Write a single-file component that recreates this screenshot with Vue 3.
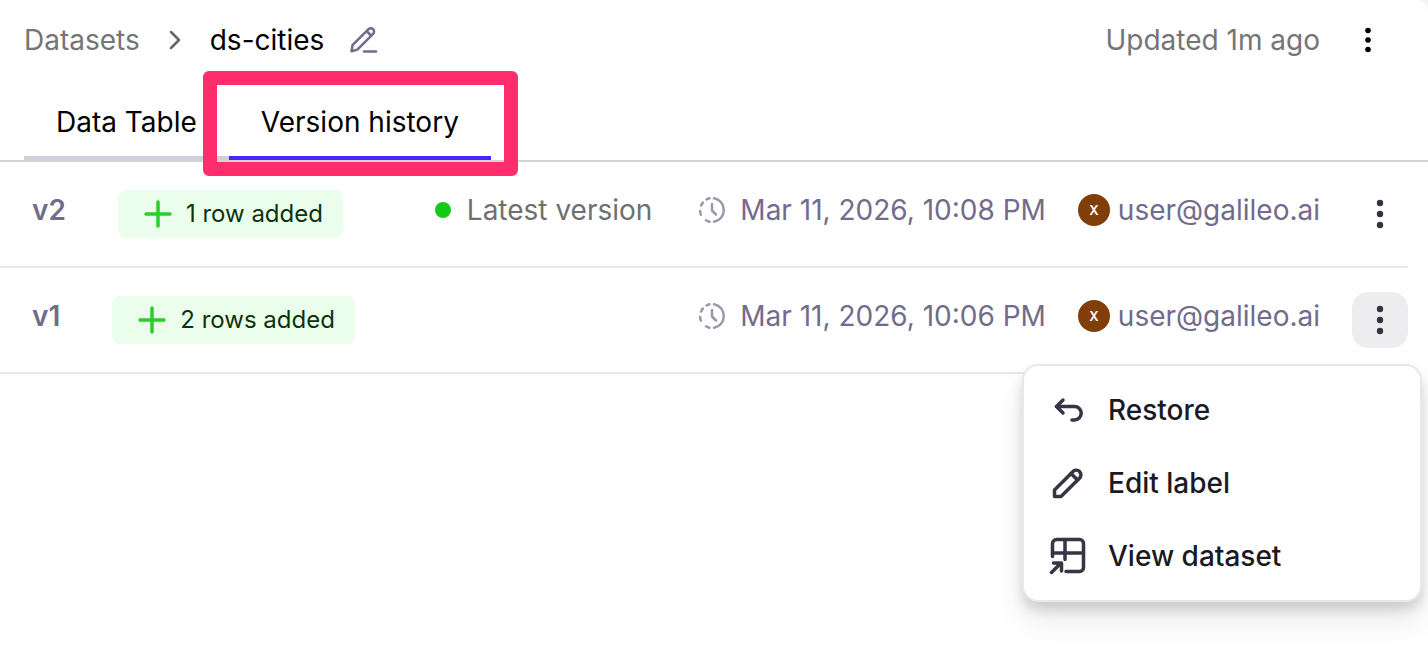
<template>
  <main class="page">
    <header class="header">
      <nav class="breadcrumb" aria-label="Breadcrumb">
        <a class="crumb" href="#">Datasets</a>
        <svg class="chevron" viewBox="0 0 32 32" aria-hidden="true">
          <path d="M12 8l8 8-8 8" />
        </svg>
        <span class="crumb-current">ds-cities</span>
        <button class="icon-button rename" type="button" aria-label="Rename dataset">
          <svg viewBox="0 0 32 32" aria-hidden="true">
            <path d="M4.500 27.200l1-6L21.500 5.200a3.200 3.200 0 0 1 4.600 4.600L10.400 25.600z" />
            <path d="M20.500 8l3 3" />
            <path d="M17 27.500h12" />
          </svg>
        </button>
      </nav>
      <div class="header-side">
        <span>Updated 1m ago</span>
        <button class="icon-button more header-more" type="button" aria-label="Dataset actions">
          <svg viewBox="0 0 32 32" aria-hidden="true">
            <circle cx="16" cy="6.500" r="2.800" />
            <circle cx="16" cy="16" r="2.800" />
            <circle cx="16" cy="25.500" r="2.800" />
          </svg>
        </button>
      </div>
    </header>

    <div class="tabs" role="tablist">
      <button
        v-for="tab in tabs"
        :key="tab"
        class="tab"
        :class="{ active: tab === activeTab }"
        type="button"
        role="tab"
        :aria-selected="tab === activeTab"
        @click="activeTab = tab"
      >
        {{ tab }}
      </button>
    </div>

    <ul class="versions">
      <li v-for="version in versions" :key="version.name" class="version">
        <span class="version-name">{{ version.name }}</span>
        <span class="badge">
          <svg viewBox="0 0 32 32" aria-hidden="true">
            <path d="M16 4v24M4 16h24" />
          </svg>
          {{ version.change }}
        </span>
        <div class="meta">
          <span v-if="version.latest" class="latest">Latest version</span>
          <span class="date">
            <svg viewBox="0 0 32 32" aria-hidden="true">
              <path d="M18 4.200a12 12 0 0 1 0 23.600" />
              <path d="M13.500 4.300a12 12 0 0 0-3 1.200M6.800 8.600a12 12 0 0 0-1.700 2.900M4.100 17a12 12 0 0 0 .8 3.600M10 26.300a12 12 0 0 0 3.500 1.400" />
              <path d="M16 10v6.500l4 4" />
            </svg>
            {{ version.date }}
          </span>
          <span class="user"><span class="avatar">X</span>{{ version.user }}</span>
        </div>
        <div class="actions">
          <button
            class="icon-button more"
            :class="{ open: openMenu === version.name }"
            type="button"
            aria-haspopup="menu"
            :aria-label="`Actions for ${version.name}`"
            :aria-expanded="openMenu === version.name"
            @click="toggleMenu(version.name)"
          >
            <svg viewBox="0 0 32 32" aria-hidden="true">
              <circle cx="16" cy="5" r="3.200" />
              <circle cx="16" cy="16" r="3.200" />
              <circle cx="16" cy="27" r="3.200" />
            </svg>
          </button>
          <div v-if="openMenu === version.name" class="menu" role="menu">
            <button class="menu-item" type="button" role="menuitem">
              <svg viewBox="0 0 40 40" aria-hidden="true">
                <path d="M15 10l-6.500 6.500L15 23" />
                <path d="M8.500 16.500h18a6.700 6.700 0 0 1 0 13.400H24" />
              </svg>
              Restore
            </button>
            <button class="menu-item" type="button" role="menuitem">
              <svg viewBox="0 0 40 40" aria-hidden="true">
                <path d="M6.500 33.500v-6.500L25.300 8.200a4.700 4.700 0 0 1 6.600 6.600L13 33.500z" />
                <path d="M23 10.500l6.500 6.500" />
              </svg>
              Edit label
            </button>
            <button class="menu-item" type="button" role="menuitem">
              <svg viewBox="0 0 40 40" aria-hidden="true">
                <path d="M4.500 20.500V7.500a4 4 0 0 1 4-4h23a4 4 0 0 1 4 4v24a4 4 0 0 1-4 4H18" />
                <path d="M4.500 17h31M17 3.500v20" />
                <path d="M3.500 36.500l9-9M5.500 27h8v8" />
              </svg>
              View dataset
            </button>
          </div>
        </div>
      </li>
    </ul>
  </main>
</template>

<script setup>
import { ref } from 'vue'

const tabs = ['Data Table', 'Version history']
const activeTab = ref('Version history')

const versions = [
  {
    name: 'v2',
    change: '1 row added',
    latest: true,
    date: 'Mar 11, 2026, 10:08 PM',
    user: 'user@galileo.ai'
  },
  {
    name: 'v1',
    change: '2 rows added',
    latest: false,
    date: 'Mar 11, 2026, 10:06 PM',
    user: 'user@galileo.ai'
  }
]

const openMenu = ref('v1')

const toggleMenu = (name) => {
  openMenu.value = openMenu.value === name ? '' : name
}
</script>

<style>
body {
  background: #f4f4f6;
}
</style>

<style scoped>
.page {
  min-height: 100vh;
  background: #fff;
  border-top-right-radius: 12px;
  font-family: Inter, 'Liberation Sans', sans-serif;
  font-size: 28px;
  line-height: 48px;
  color: #000;
}

button {
  border: 0;
  background: none;
  font: inherit;
  color: inherit;
  cursor: pointer;
}

svg {
  flex: none;
  width: 32px;
  height: 32px;
  fill: none;
  stroke: currentColor;
  stroke-width: 2.5;
  stroke-linecap: round;
  stroke-linejoin: round;
}

.header {
  height: 80px;
  padding: 0 32px 0 24px;
  display: flex;
  align-items: center;
  justify-content: space-between;
}

.breadcrumb,
.header-side {
  display: flex;
  align-items: center;
}

.breadcrumb {
  gap: 19px;
}

.header-side {
  gap: 20px;
}

.crumb,
.header-side {
  color: #757575;
  text-decoration: none;
}

.chevron {
  color: #666;
}

.icon-button {
  display: flex;
  align-items: center;
  justify-content: center;
  width: 56px;
  height: 56px;
  padding: 0;
  border-radius: 16px;
}

.rename {
  width: 40px;
  color: #726b8c;
}

.more svg {
  fill: currentColor;
  stroke: none;
}

.header-more {
  color: #000;
}

.tabs {
  display: flex;
  padding-left: 24px;
  border-bottom: 2px solid #d3d3d6;
}

.tab {
  position: relative;
  padding: 24px 32px 16px;
  border-bottom: 4px solid #d0cfdc;
  line-height: 36px;
}

.tab.active {
  border-bottom-color: #4628f2;
}

/* callout frame around the selected tab */
.tab.active::after {
  content: '';
  position: absolute;
  z-index: 1;
  inset: -9px -27px -20px -26px;
  border: 14px solid #ff2d6b;
  border-radius: 6px;
  pointer-events: none;
}

.versions {
  margin: 0;
  padding: 0 20px 0 0;
  list-style: none;
}

.version {
  display: flex;
  align-items: flex-start;
  padding: 24px 0 24px 32px;
  border-bottom: 2px solid #e7e7ec;
  color: #726b8c;
}

.version-name {
  margin-right: 52px;
  font-weight: 600;
}

.badge {
  display: flex;
  align-items: center;
  gap: 8px;
  margin-top: 4px;
  padding: 0 20px;
  border-radius: 8px;
  background: #ebfeeb;
  color: #0b330b;
  font-size: 24px;
}

.badge svg {
  width: 40px;
  color: #2fcb2b;
  stroke-width: 3.5;
}

.meta {
  display: flex;
  gap: 32px;
  margin-left: auto;
}

.latest,
.date,
.user {
  display: flex;
  align-items: center;
}

.latest {
  gap: 16px;
  margin-right: 12px;
  color: #6f6f6f;
}

.latest::before {
  content: '';
  width: 16px;
  height: 16px;
  border-radius: 50%;
  background: #17c917;
}

.date {
  gap: 12px;
}

.date svg {
  color: #9b97ad;
}

.user {
  gap: 8px;
}

.avatar {
  width: 32px;
  height: 32px;
  border-radius: 50%;
  background: #803f0a;
  color: #fff;
  font-size: 13px;
  font-weight: 600;
  line-height: 32px;
  text-align: center;
}

.actions {
  position: relative;
  margin-left: 32px;
  color: #343241;
}

.icon-button.open {
  background: #ededef;
}

.menu {
  position: absolute;
  z-index: 2;
  top: 72px;
  right: -14px;
  box-sizing: border-box;
  width: 400px;
  padding: 8px 0;
  display: flex;
  flex-direction: column;
  gap: 1px;
  border: 2px solid #e7e7ec;
  border-radius: 16px;
  background: #fff;
  box-shadow: 0 20px 32px rgba(0, 0, 0, 0.08), 0 8px 12px rgba(0, 0, 0, 0.14);
}

.menu-item {
  display: flex;
  align-items: center;
  gap: 20px;
  height: 72px;
  padding: 0 24px;
  color: #1a1a22;
  font-weight: 500;
}

.menu-item svg {
  width: 40px;
  height: 40px;
  color: #373444;
  stroke-width: 3.5;
}
</style>
